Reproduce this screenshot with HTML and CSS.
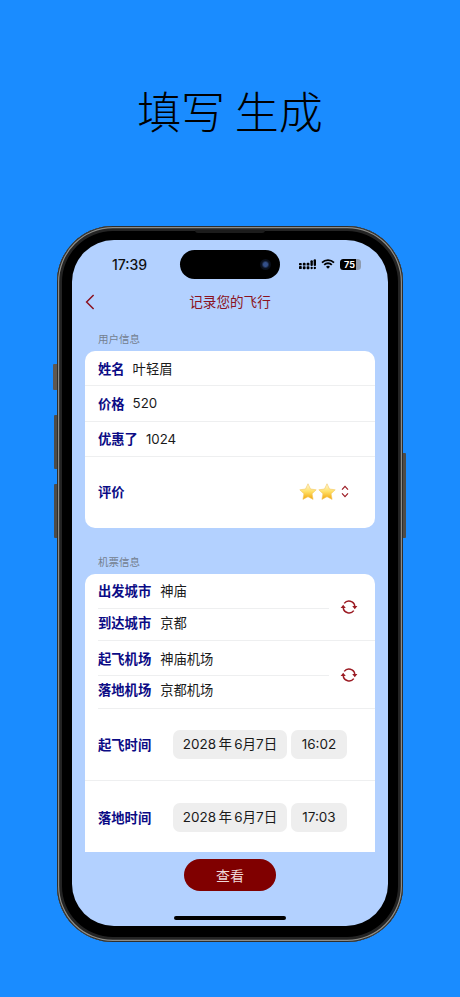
FILE: index.html
```html
<!DOCTYPE html>
<html lang="zh">
<head>
<meta charset="utf-8">
<title>填写 生成</title>
<link rel="stylesheet" href="styles.css">
</head>
<body>
<h1 class="headline">填写 生成</h1>
<div class="phone">
  <span class="side-btn mute"></span>
  <span class="side-btn vol-up"></span>
  <span class="side-btn vol-down"></span>
  <span class="side-btn power"></span>
  <span class="speaker"></span>
  <div class="screen">
    <div class="island"><span class="camera"></span></div>
    <div class="status">
      <span class="clock">17:39</span>
      <span class="status-icons">
        <svg class="signal" width="17" height="11" viewBox="0 0 16 10"><g fill="#000"><rect x="0" y="6.5" width="2.6" height="2.8" rx=".8"/><rect x="3.6" y="3.4" width="2.6" height="2.6" rx=".8"/><rect x="3.6" y="6.6" width="2.6" height="2.8" rx=".8"/><rect x="7.2" y="3.4" width="2.6" height="2.6" rx=".8"/><rect x="7.2" y="6.6" width="2.6" height="2.8" rx=".8"/><rect x="0" y="3.6" width="2.6" height="2.2" rx=".8"/><rect x="10.8" y="1" width="2.2" height="5.4" rx="1"/><rect x="10.8" y="7.2" width="2.2" height="2.2" rx="1"/><rect x="13.8" y="0" width="2.2" height="6.4" rx="1"/><rect x="13.8" y="7.2" width="2.2" height="2.2" rx="1"/></g></svg>
        <svg class="wifi" width="14" height="10" viewBox="0 0 14 10"><g fill="none" stroke="#000" stroke-width="1.8"><path d="M1 3.6a8.6 8.6 0 0 1 12 0"/><path d="M3.2 5.8a5.4 5.4 0 0 1 7.6 0"/></g><path d="M7 9.8 5 7.7a2.9 2.9 0 0 1 4 0Z" fill="#000"/></svg>
        <span class="battery"><span class="battery-fill">75</span></span>
      </span>
    </div>
    <header class="nav">
      <svg class="back" width="10" height="16" viewBox="0 0 10 16"><path d="M8.6 1 1.6 8l7 7" fill="none" stroke="#8b1220" stroke-width="1.5"/></svg>
      <span class="nav-title">记录您的飞行</span>
    </header>
    <main class="scroll">
      <p class="section-label">用户信息</p>
      <section class="card card-user">
        <div class="row line"><span class="label">姓名</span><span class="value">叶轻眉</span></div>
        <div class="row line"><span class="label">价格</span><span class="value">520</span></div>
        <div class="row line"><span class="label">优惠了</span><span class="value">1024</span></div>
        <div class="row rating">
          <span class="label">评价</span>
          <span class="stars">
            <svg width="18" height="17" viewBox="0 0 18 17"><defs><linearGradient id="gold" x1="0" y1="0" x2="0" y2="1"><stop offset="0" stop-color="#fff8dc"/><stop offset=".5" stop-color="#ffe066"/><stop offset="1" stop-color="#f2a50c"/></linearGradient></defs><path d="M9 .8l2.5 5.2 5.7.8-4.1 4 1 5.6L9 13.7l-5.1 2.7 1-5.6-4.1-4 5.7-.8Z" fill="url(#gold)" stroke="#f3c860" stroke-width=".6"/></svg>
            <svg width="18" height="17" viewBox="0 0 18 17"><path d="M9 .8l2.5 5.2 5.7.8-4.1 4 1 5.6L9 13.7l-5.1 2.7 1-5.6-4.1-4 5.7-.8Z" fill="url(#gold)" stroke="#f3c860" stroke-width=".6"/></svg>
            <svg class="updown" width="8" height="13" viewBox="0 0 8 13"><path d="M1 4.6 4 1.4l3 3.2M1 8.4l3 3.2 3-3.2" fill="none" stroke="#9c1c24" stroke-width="1.2"/></svg>
          </span>
        </div>
      </section>
      <p class="section-label second">机票信息</p>
      <section class="card">
        <div class="pair line">
          <div class="pair-rows">
            <div class="row small line"><span class="label wide">出发城市</span><span class="value">神庙</span></div>
            <div class="row small"><span class="label wide">到达城市</span><span class="value">京都</span></div>
          </div>
          <svg class="swap" width="16" height="16" viewBox="0 0 16 16"><g fill="none" stroke="#9c1c24" stroke-width="1.5"><path d="M3.2 4.4A6 6 0 0 1 13.8 7"/><path d="M12.8 11.6A6 6 0 0 1 2.2 9"/></g><path d="M11.2 7h5.2l-2.6 3.2ZM-.4 9h5.2L2.2 5.8Z" fill="#9c1c24"/></svg>
        </div>
        <div class="pair line">
          <div class="pair-rows">
            <div class="row small line"><span class="label wide">起飞机场</span><span class="value">神庙机场</span></div>
            <div class="row small"><span class="label wide">落地机场</span><span class="value">京都机场</span></div>
          </div>
          <svg class="swap" width="16" height="16" viewBox="0 0 16 16"><g fill="none" stroke="#9c1c24" stroke-width="1.5"><path d="M3.2 4.4A6 6 0 0 1 13.8 7"/><path d="M12.8 11.6A6 6 0 0 1 2.2 9"/></g><path d="M11.2 7h5.2l-2.6 3.2ZM-.4 9h5.2L2.2 5.8Z" fill="#9c1c24"/></svg>
        </div>
        <div class="row time line"><span class="label time-label">起飞时间</span><span class="pill date">2028 年 6月7日</span><span class="pill clock-pill">16:02</span></div>
        <div class="row time"><span class="label time-label">落地时间</span><span class="pill date">2028 年 6月7日</span><span class="pill clock-pill">17:03</span></div>
      </section>
    </main>
    <footer class="footer">
      <button class="view-btn" type="button">查看</button>
      <span class="home-bar"></span>
    </footer>
  </div>
</div>
</body>
</html>
```
FILE: styles.css
```css
* { box-sizing: border-box; }
html, body { margin: 0; padding: 0; }
body {
  width: 460px;
  height: 997px;
  overflow: hidden;
  background: #1a8cff;
  font-family: Inter, "Noto Sans CJK SC", sans-serif;
  display: flex;
  flex-direction: column;
  align-items: center;
}
.headline {
  margin: 80px 0 0;
  height: 146px;
  font-size: 44px;
  line-height: 60px;
  font-weight: 300;
  color: #000;
  font-family: "Noto Sans CJK SC", sans-serif;
}
.phone {
  position: relative;
  width: 346px;
  height: 716px;
  padding: 14px 15px 16px;
  border-radius: 56px;
  background: #000;
  box-shadow: inset 0 0 0 1px #2e2e2c, inset 0 0 0 2.2px #8c8c88, inset 0 0 0 5px #242424;
}
.side-btn { position: absolute; width: 3px; background: #4e4c48; border-radius: 1px 0 0 1px; }
.mute { left: -4px; top: 138px; height: 26px; width: 4px; background: #5f5850; }
.vol-up { left: -3px; top: 189px; height: 54px; }
.vol-down { left: -3px; top: 258px; height: 54px; }
.power { right: -3px; top: 227px; height: 85px; border-radius: 0 1px 1px 0; }
.speaker {
  position: absolute;
  left: 138px;
  top: 4px;
  width: 70px;
  height: 3px;
  border-radius: 0 0 3px 3px;
  background: #1c1c1c;
}
.screen {
  position: relative;
  width: 316px;
  height: 686px;
  border-radius: 42px;
  overflow: hidden;
  background: #b3d1ff;
  display: flex;
  flex-direction: column;
}
.island {
  position: absolute;
  left: 108px;
  top: 10px;
  width: 100px;
  height: 29px;
  border-radius: 15px;
  background: #000;
}
.camera {
  position: absolute;
  right: 9px;
  top: 9px;
  width: 11px;
  height: 11px;
  border-radius: 50%;
  background: radial-gradient(circle, #34508a 0 25%, #0b1220 50%, #05070d 100%);
}
.status {
  height: 48px;
  flex: none;
  display: flex;
  align-items: center;
  justify-content: space-between;
  padding: 0 27px 0 40px;
}
.clock { font-size: 14px; font-weight: 500; color: #111; }
.status-icons { display: flex; align-items: center; gap: 5px; }
.battery {
  display: block;
  width: 21px;
  height: 11px;
  border-radius: 3.5px;
  background: #8e9bb0;
}
.battery-fill {
  display: block;
  width: 16px;
  height: 11px;
  border-radius: 3.5px 0 0 3.5px;
  background: #000;
  color: #fff;
  font-size: 9px;
  font-weight: 700;
  line-height: 11px;
  text-align: center;
  padding-left: 3px;
}
.nav {
  position: relative;
  height: 27px;
  padding-bottom: 2px;
  flex: none;
  display: flex;
  align-items: center;
  justify-content: center;
}
.back { position: absolute; left: 13px; top: 6px; }
.nav-title { font-size: 13.6px; color: #8b1220; }
.scroll { flex: 1; min-height: 0; overflow: hidden; padding: 0 13px; }
.section-label {
  margin: 0;
  height: 36px;
  padding: 17px 0 0 13px;
  font-size: 10.5px;
  line-height: 15px;
  color: #74808f;
}
.section-label.second { height: 46px; padding-top: 27px; }
.card { background: #fff; border-radius: 10px; overflow: hidden; }
.scroll .card:last-child { border-radius: 10px 10px 0 0; }
.row { display: flex; align-items: center; gap: 8px; padding-left: 13px; height: 35.3px; font-size: 13.3px; }
.line { border-bottom: 1px solid #eeeff0; }
.label { color: #0b0b85; font-weight: 700; flex: none; }
.value { color: #1a1a1a; }
.rating { height: 71px; padding-bottom: 2px; }
.stars { margin-left: auto; margin-right: 26px; display: flex; align-items: center; gap: 1px; }
.updown { margin-left: 4px; }
.pair { display: flex; align-items: center; margin-left: 13px; }
.pair-rows { width: 231px; flex: none; padding-bottom: 3.5px; }
.pair .row { padding-left: 0; }
.wide { margin-right: 1px; }
.small { height: 28px; padding-bottom: 1px; }
.pair-rows .small.line { height: 35px; padding-bottom: 0; }
.swap { margin-left: 12px; overflow: visible; }
.time { height: 72.6px; gap: 0; }
.time-label { width: 75px; }
.pill {
  height: 29px;
  border-radius: 7px;
  background: #eeeeee;
  color: #1a1a1a;
  font-size: 13.5px;
  line-height: 29px;
  text-align: center;
}
.date { width: 114px; margin-right: 4px; word-spacing: -1.5px; }
.clock-pill { width: 56px; }
.footer {
  height: 74px;
  flex: none;
  display: flex;
  flex-direction: column;
  align-items: center;
  padding-top: 7px;
}
.view-btn {
  width: 92px;
  height: 32px;
  border: 0;
  border-radius: 16px;
  background: #800000;
  color: #eed9d9;
  font: 14px "Noto Sans CJK SC", sans-serif;
}
.home-bar {
  display: block;
  width: 112px;
  height: 4px;
  margin-top: 25px;
  border-radius: 2px;
  background: #000;
}
```
